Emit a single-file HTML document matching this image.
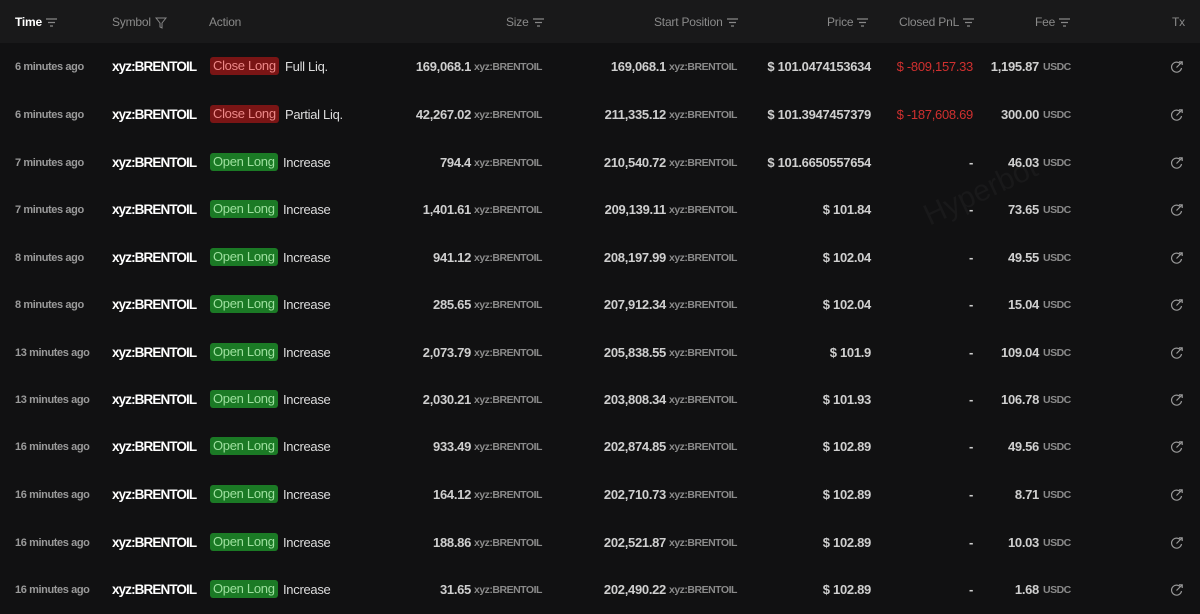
<!DOCTYPE html>
<html><head><meta charset="utf-8"><style>
*{margin:0;padding:0;box-sizing:border-box}
body{width:1200px;height:614px;background:#111112;font-family:"Liberation Sans",Arial,sans-serif;overflow:hidden;position:relative;color:#ddd}
.hd{position:absolute;left:0;top:0;width:1200px;height:43px;background:#19191a}
.h{position:absolute;top:15px;font-size:12px;color:#8a8a8a;white-space:nowrap;letter-spacing:-.2px}
.fi{display:inline-block;vertical-align:middle;margin-left:4px}
.r{position:absolute;left:0;width:1200px;height:47px}
.r span{position:absolute;top:16px;white-space:nowrap}
.t{left:15px;font-size:11px;color:#9a9a9a;font-weight:bold;letter-spacing:-.4px;top:18px!important}
.s{left:112px;font-size:13.5px;color:#fff;font-weight:bold;letter-spacing:-.9px}
.b{left:210px;top:14px!important;font-size:13px;padding:1px 3px;border-radius:3px;line-height:16px;letter-spacing:-.3px}
.cl{background:#7a1515;color:#e88}
.ol{background:#1b7a25;color:#9ee09f}
.a{font-size:13px;color:#ddd;letter-spacing:-.3px}
.n{font-size:13px;color:#cfcfcf;text-align:right;font-weight:bold;letter-spacing:-.3px}
.u{font-size:10.5px;color:#8a8a8a;font-weight:bold;top:18px!important;letter-spacing:-.5px}
.red{color:#d0302f}
</style></head><body>
<div class="hd"></div>
<svg width="0" height="0" style="position:absolute"><defs>
<g id="f"><path d="M0 1h11M2 4.5h7M4 8h3" stroke="#888" stroke-width="1.2" fill="none"/></g>
<g id="e"><path d="M10 3.5A5 5 0 1 0 11.5 8" stroke="#999" stroke-width="1.2" fill="none"/><path d="M6.5 7.5L12 2M9 1.8h3.2v3.2" stroke="#999" stroke-width="1.2" fill="none"/></g>
</defs></svg>
<div class="h" style="left:15px;color:#fff;font-weight:bold">Time<svg class="fi" width="12" height="10"><use href="#f"/></svg></div>
<div class="h" style="left:112px">Symbol<svg class="fi" width="12" height="12" viewBox="0 0 12 12"><path d="M1 1h10L7 6v5L5 10V6z" stroke="#888" fill="none"/></svg></div>
<div class="h" style="left:209px">Action</div>
<div class="h" style="left:506px">Size<svg class="fi" width="12" height="10"><use href="#f"/></svg></div>
<div class="h" style="left:654px">Start Position<svg class="fi" width="12" height="10"><use href="#f"/></svg></div>
<div class="h" style="left:827px">Price<svg class="fi" width="12" height="10"><use href="#f"/></svg></div>
<div class="h" style="left:899px">Closed PnL<svg class="fi" width="12" height="10"><use href="#f"/></svg></div>
<div class="h" style="left:1035px">Fee<svg class="fi" width="12" height="10"><use href="#f"/></svg></div>
<div class="h" style="left:1172px">Tx</div>

<div style="position:absolute;left:920px;top:175px;transform:rotate(-25deg);font-size:30px;color:#19191a">Hyperbot</div>

<div class="r" style="top:43px"><span class="t">6 minutes ago</span><span class="s">xyz:BRENTOIL</span><span class="b cl">Close Long</span><span class="a" style="left:285px">Full Liq.</span><span class="n" style="right:729px">169,068.1</span><span class="u" style="left:474px">xyz:BRENTOIL</span><span class="n" style="right:534px">169,068.1</span><span class="u" style="left:669px">xyz:BRENTOIL</span><span class="n" style="right:329px">$ 101.0474153634</span><span class="n red" style="right:227px;font-weight:normal">$ -809,157.33</span><span class="n" style="right:161px">1,195.87</span><span class="u" style="left:1043px">USDC</span><svg style="position:absolute;left:1170px;top:17px" width="14" height="14"><use href="#e"/></svg></div>
<div class="r" style="top:91px"><span class="t">6 minutes ago</span><span class="s">xyz:BRENTOIL</span><span class="b cl">Close Long</span><span class="a" style="left:285px">Partial Liq.</span><span class="n" style="right:729px">42,267.02</span><span class="u" style="left:474px">xyz:BRENTOIL</span><span class="n" style="right:534px">211,335.12</span><span class="u" style="left:669px">xyz:BRENTOIL</span><span class="n" style="right:329px">$ 101.3947457379</span><span class="n red" style="right:227px;font-weight:normal">$ -187,608.69</span><span class="n" style="right:161px">300.00</span><span class="u" style="left:1043px">USDC</span><svg style="position:absolute;left:1170px;top:17px" width="14" height="14"><use href="#e"/></svg></div>
<div class="r" style="top:139px"><span class="t">7 minutes ago</span><span class="s">xyz:BRENTOIL</span><span class="b ol">Open Long</span><span class="a" style="left:283px">Increase</span><span class="n" style="right:729px">794.4</span><span class="u" style="left:474px">xyz:BRENTOIL</span><span class="n" style="right:534px">210,540.72</span><span class="u" style="left:669px">xyz:BRENTOIL</span><span class="n" style="right:329px">$ 101.6650557654</span><span class="n" style="right:227px">-</span><span class="n" style="right:161px">46.03</span><span class="u" style="left:1043px">USDC</span><svg style="position:absolute;left:1170px;top:17px" width="14" height="14"><use href="#e"/></svg></div>
<div class="r" style="top:186px"><span class="t">7 minutes ago</span><span class="s">xyz:BRENTOIL</span><span class="b ol">Open Long</span><span class="a" style="left:283px">Increase</span><span class="n" style="right:729px">1,401.61</span><span class="u" style="left:474px">xyz:BRENTOIL</span><span class="n" style="right:534px">209,139.11</span><span class="u" style="left:669px">xyz:BRENTOIL</span><span class="n" style="right:329px">$ 101.84</span><span class="n" style="right:227px">-</span><span class="n" style="right:161px">73.65</span><span class="u" style="left:1043px">USDC</span><svg style="position:absolute;left:1170px;top:17px" width="14" height="14"><use href="#e"/></svg></div>
<div class="r" style="top:234px"><span class="t">8 minutes ago</span><span class="s">xyz:BRENTOIL</span><span class="b ol">Open Long</span><span class="a" style="left:283px">Increase</span><span class="n" style="right:729px">941.12</span><span class="u" style="left:474px">xyz:BRENTOIL</span><span class="n" style="right:534px">208,197.99</span><span class="u" style="left:669px">xyz:BRENTOIL</span><span class="n" style="right:329px">$ 102.04</span><span class="n" style="right:227px">-</span><span class="n" style="right:161px">49.55</span><span class="u" style="left:1043px">USDC</span><svg style="position:absolute;left:1170px;top:17px" width="14" height="14"><use href="#e"/></svg></div>
<div class="r" style="top:281px"><span class="t">8 minutes ago</span><span class="s">xyz:BRENTOIL</span><span class="b ol">Open Long</span><span class="a" style="left:283px">Increase</span><span class="n" style="right:729px">285.65</span><span class="u" style="left:474px">xyz:BRENTOIL</span><span class="n" style="right:534px">207,912.34</span><span class="u" style="left:669px">xyz:BRENTOIL</span><span class="n" style="right:329px">$ 102.04</span><span class="n" style="right:227px">-</span><span class="n" style="right:161px">15.04</span><span class="u" style="left:1043px">USDC</span><svg style="position:absolute;left:1170px;top:17px" width="14" height="14"><use href="#e"/></svg></div>
<div class="r" style="top:329px"><span class="t">13 minutes ago</span><span class="s">xyz:BRENTOIL</span><span class="b ol">Open Long</span><span class="a" style="left:283px">Increase</span><span class="n" style="right:729px">2,073.79</span><span class="u" style="left:474px">xyz:BRENTOIL</span><span class="n" style="right:534px">205,838.55</span><span class="u" style="left:669px">xyz:BRENTOIL</span><span class="n" style="right:329px">$ 101.9</span><span class="n" style="right:227px">-</span><span class="n" style="right:161px">109.04</span><span class="u" style="left:1043px">USDC</span><svg style="position:absolute;left:1170px;top:17px" width="14" height="14"><use href="#e"/></svg></div>
<div class="r" style="top:376px"><span class="t">13 minutes ago</span><span class="s">xyz:BRENTOIL</span><span class="b ol">Open Long</span><span class="a" style="left:283px">Increase</span><span class="n" style="right:729px">2,030.21</span><span class="u" style="left:474px">xyz:BRENTOIL</span><span class="n" style="right:534px">203,808.34</span><span class="u" style="left:669px">xyz:BRENTOIL</span><span class="n" style="right:329px">$ 101.93</span><span class="n" style="right:227px">-</span><span class="n" style="right:161px">106.78</span><span class="u" style="left:1043px">USDC</span><svg style="position:absolute;left:1170px;top:17px" width="14" height="14"><use href="#e"/></svg></div>
<div class="r" style="top:423px"><span class="t">16 minutes ago</span><span class="s">xyz:BRENTOIL</span><span class="b ol">Open Long</span><span class="a" style="left:283px">Increase</span><span class="n" style="right:729px">933.49</span><span class="u" style="left:474px">xyz:BRENTOIL</span><span class="n" style="right:534px">202,874.85</span><span class="u" style="left:669px">xyz:BRENTOIL</span><span class="n" style="right:329px">$ 102.89</span><span class="n" style="right:227px">-</span><span class="n" style="right:161px">49.56</span><span class="u" style="left:1043px">USDC</span><svg style="position:absolute;left:1170px;top:17px" width="14" height="14"><use href="#e"/></svg></div>
<div class="r" style="top:471px"><span class="t">16 minutes ago</span><span class="s">xyz:BRENTOIL</span><span class="b ol">Open Long</span><span class="a" style="left:283px">Increase</span><span class="n" style="right:729px">164.12</span><span class="u" style="left:474px">xyz:BRENTOIL</span><span class="n" style="right:534px">202,710.73</span><span class="u" style="left:669px">xyz:BRENTOIL</span><span class="n" style="right:329px">$ 102.89</span><span class="n" style="right:227px">-</span><span class="n" style="right:161px">8.71</span><span class="u" style="left:1043px">USDC</span><svg style="position:absolute;left:1170px;top:17px" width="14" height="14"><use href="#e"/></svg></div>
<div class="r" style="top:519px"><span class="t">16 minutes ago</span><span class="s">xyz:BRENTOIL</span><span class="b ol">Open Long</span><span class="a" style="left:283px">Increase</span><span class="n" style="right:729px">188.86</span><span class="u" style="left:474px">xyz:BRENTOIL</span><span class="n" style="right:534px">202,521.87</span><span class="u" style="left:669px">xyz:BRENTOIL</span><span class="n" style="right:329px">$ 102.89</span><span class="n" style="right:227px">-</span><span class="n" style="right:161px">10.03</span><span class="u" style="left:1043px">USDC</span><svg style="position:absolute;left:1170px;top:17px" width="14" height="14"><use href="#e"/></svg></div>
<div class="r" style="top:566px"><span class="t">16 minutes ago</span><span class="s">xyz:BRENTOIL</span><span class="b ol">Open Long</span><span class="a" style="left:283px">Increase</span><span class="n" style="right:729px">31.65</span><span class="u" style="left:474px">xyz:BRENTOIL</span><span class="n" style="right:534px">202,490.22</span><span class="u" style="left:669px">xyz:BRENTOIL</span><span class="n" style="right:329px">$ 102.89</span><span class="n" style="right:227px">-</span><span class="n" style="right:161px">1.68</span><span class="u" style="left:1043px">USDC</span><svg style="position:absolute;left:1170px;top:17px" width="14" height="14"><use href="#e"/></svg></div>
</body></html>
